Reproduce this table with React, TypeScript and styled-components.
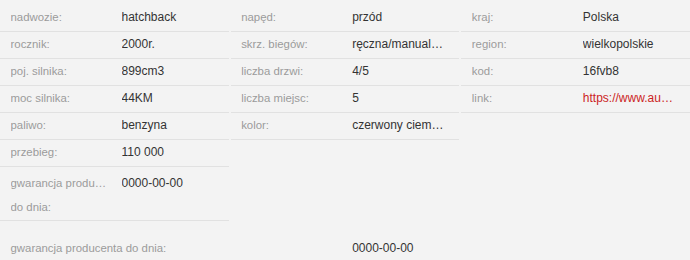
import React from "react";
import styled, { createGlobalStyle } from "styled-components";

const GlobalStyle = createGlobalStyle`
  html, body {
    margin: 0;
    padding: 0;
    background: #f3f3f3;
  }
  body {
    font-family: "Liberation Sans", Arial, Helvetica, sans-serif;
    color: #333;
  }
`;

const Page = styled.div`
  width: 690px;
  padding-top: 5px;
  box-sizing: border-box;
`;

const Columns = styled.div`
  display: grid;
  grid-template-columns: repeat(3, 1fr);
  column-gap: 2px;
  align-items: start;
`;

const Column = styled.div`
  display: flex;
  flex-direction: column;
  min-width: 0;
`;

const Row = styled.div<{ $tall?: boolean }>`
  display: grid;
  grid-template-columns: 111px minmax(0, 1fr);
  grid-auto-rows: 24px;
  align-items: center;
  padding: ${(p) => (p.$tall ? "4px 15.5px 0 10.5px" : "0 15.5px 0 10.5px")};
  height: ${(p) => (p.$tall ? "49px" : "26px")};
  border-bottom: 1px solid #e1e1e1;
`;

const Label = styled.span`
  font-size: 11.4px;
  color: #9b9b9b;
  padding-right: 12px;
  white-space: nowrap;
  overflow: hidden;
  text-overflow: ellipsis;
`;

const Value = styled.span<{ $link?: boolean }>`
  font-size: 12px;
  color: ${(p) => (p.$link ? "#cc1f1f" : "#333")};
  white-space: nowrap;
  overflow: hidden;
  text-overflow: ellipsis;
`;

const Footer = styled.div`
  display: grid;
  grid-template-columns: repeat(3, 1fr);
  column-gap: 2px;
  align-items: center;
  height: 27px;
  margin-top: 13px;
`;

const FooterLabel = styled.span`
  font-size: 11.4px;
  color: #9b9b9b;
  padding-left: 10.5px;
  white-space: nowrap;
`;

const FooterValue = styled.span`
  font-size: 12px;
  color: #333;
  padding-left: 121.5px;
  white-space: nowrap;
`;

type Item = { label: string; value: string; link?: boolean };

const columns: Item[][] = [
  [
    { label: "nadwozie:", value: "hatchback" },
    { label: "rocznik:", value: "2000r." },
    { label: "poj. silnika:", value: "899cm3" },
    { label: "moc silnika:", value: "44KM" },
    { label: "paliwo:", value: "benzyna" },
    { label: "przebieg:", value: "110 000" },
  ],
  [
    { label: "napęd:", value: "przód" },
    { label: "skrz. biegów:", value: "ręczna/manualna" },
    { label: "liczba drzwi:", value: "4/5" },
    { label: "liczba miejsc:", value: "5" },
    { label: "kolor:", value: "czerwony ciemny" },
  ],
  [
    { label: "kraj:", value: "Polska" },
    { label: "region:", value: "wielkopolskie" },
    { label: "kod:", value: "16fvb8" },
    {
      label: "link:",
      value: "https://www.autoscout24.pl/oferta/16fvb8",
      link: true,
    },
  ],
];

export default function App() {
  return (
    <>
      <GlobalStyle />
      <Page>
        <Columns>
          {columns.map((items, ci) => (
            <Column key={ci}>
              {items.map((it) => (
                <Row key={it.label}>
                  <Label>{it.label}</Label>
                  <Value $link={it.link}>{it.value}</Value>
                </Row>
              ))}
              {ci === 0 && (
                <Row $tall>
                  <Label>gwarancja producenta</Label>
                  <Value>0000-00-00</Value>
                  <Label>do dnia:</Label>
                </Row>
              )}
            </Column>
          ))}
        </Columns>
        <Footer>
          <FooterLabel>gwarancja producenta do dnia:</FooterLabel>
          <FooterValue>0000-00-00</FooterValue>
        </Footer>
      </Page>
    </>
  );
}
